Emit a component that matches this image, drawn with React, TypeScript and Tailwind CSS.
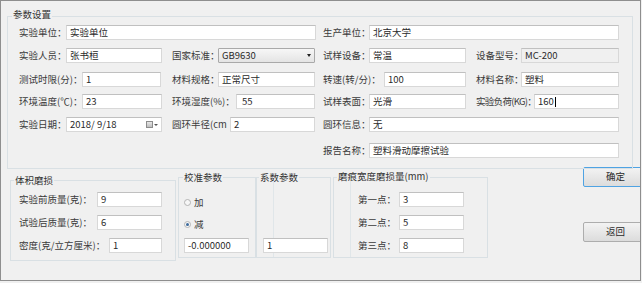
import React from "react";

interface LabelProps {
  w: string;
  className?: string;
  children: React.ReactNode;
}

const Label: React.FC<LabelProps> = ({ w, className = "", children }) => (
  <span className={`${w} ${className} shrink-0 whitespace-nowrap text-[#3a3a3a]`}>
    {children}
  </span>
);

interface BoxProps {
  w: string;
  value?: React.ReactNode;
  gray?: boolean;
  className?: string;
}

const Box: React.FC<BoxProps> = ({ w, value, gray, className = "" }) => (
  <div
    className={`${w} ${className} relative z-10 flex h-[15px] shrink-0 items-center border border-[#d8d8d8] border-t-[#c0c0c0] px-[3px] whitespace-nowrap text-[#2a2a2a] ${
      gray ? "bg-[#f0f0f0]" : "bg-white"
    }`}
  >
    {value}
  </div>
);

const Select: React.FC<{ w: string; value: string }> = ({ w, value }) => (
  <div
    className={`${w} flex h-[15px] shrink-0 items-center justify-between rounded-[1px] border border-[#a9a9a9] bg-linear-to-b from-[#f7f7f7] to-[#e4e4e4] pl-[3px] pr-[3px] text-[#2a2a2a]`}
  >
    <span>{value}</span>
    <span className="h-0 w-0 border-x-[2px] border-t-[3px] border-x-transparent border-t-[#222]" />
  </div>
);

const DateBox: React.FC<{ w: string; value: string }> = ({ w, value }) => (
  <div
    className={`${w} flex h-[15px] shrink-0 items-center justify-between border border-[#d8d8d8] border-t-[#c0c0c0] bg-white pl-[3px] pr-[3px] text-[#2a2a2a]`}
  >
    <span className="whitespace-pre">{value}</span>
    <span className="flex items-center gap-[1px]">
      <span className="h-[7px] w-[7px] border border-[#8c8c8c] bg-linear-to-b from-[#e8e8e8] to-[#bdbdbd]" />
      <span className="h-0 w-0 border-x-[2px] border-t-[2px] border-x-transparent border-t-[#555]" />
    </span>
  </div>
);

interface GroupProps {
  title: string;
  className: string;
  titleClass: string;
  children?: React.ReactNode;
}

const Group: React.FC<GroupProps> = ({ title, className, titleClass, children }) => (
  <div className={`${className} relative shrink-0 border border-[#d9e0e4]`}>
    <span
      className={`${titleClass} absolute bg-[#f0f0f0] px-[1px] leading-[10px] whitespace-nowrap text-[#333]`}
    >
      {title}
    </span>
    {children}
  </div>
);

const Radio: React.FC<{ label: string; checked?: boolean; className: string }> = ({
  label,
  checked,
  className,
}) => (
  <div className={`${className} flex h-[11px] items-center gap-[3px]`}>
    <span className="flex h-[7px] w-[7px] items-center justify-center rounded-full border border-[#b4b4b4] bg-[#f6f6f6]">
      {checked ? <span className="h-[3px] w-[3px] rounded-full bg-[#3d6a9c]" /> : null}
    </span>
    <span className="text-[#3a3a3a]">{label}</span>
  </div>
);

const Button: React.FC<{ label: string; focused?: boolean; className?: string }> = ({
  label,
  focused,
  className = "",
}) => (
  <div
    className={`${className} flex h-[20px] w-[75px] items-center justify-center rounded-[2px] border bg-linear-to-b from-[#f3f3f3] to-[#dcdcdc] text-[#2a2a2a] ${
      focused ? "border-[#4fa3e3]" : "border-[#adadad]"
    }`}
  >
    <span className="-ml-[10px]">{label}</span>
  </div>
);

const App: React.FC = () => {
  return (
    <div className="h-[283px] w-[642px] bg-[#f0f0f0] font-['Noto_Sans_CJK_SC','Noto_Sans',sans-serif] text-[9.5px] leading-none">
      <div className="h-[281px] w-[641px] overflow-hidden border border-[#8e8e8e]">
        {/* 参数设置 */}
        <Group
          title="参数设置"
          className="ml-[6px] mt-[15px] h-[153px] w-[626px]"
          titleClass="left-[4px] -top-[8px]"
        >
          <div className="flex flex-col pl-[11px]">
            <div className="mt-[8px] flex h-[15px] items-center">
              <Label w="w-[47px]">实验单位：</Label>
              <Box w="w-[250px]" value="实验单位" />
              <Label w="w-[46px]" className="ml-[7px]">生产单位：</Label>
              <Box w="w-[250px]" value="北京大学" />
            </div>
            <div className="mt-[8px] flex h-[15px] items-center">
              <Label w="w-[47px]">实验人员：</Label>
              <Box w="w-[96px]" value="张书桓" />
              <Label w="w-[46px]" className="ml-[10px]">国家标准：</Label>
              <Select w="w-[97px]" value="GB9630" />
              <Label w="w-[46px]" className="ml-[8px]">试样设备：</Label>
              <Box w="w-[97px]" value="常温" />
              <Label w="w-[45px]" className="ml-[10px]">设备型号：</Label>
              <Box w="w-[98px]" value="MC-200" gray />
            </div>
            <div className="mt-[9px] flex h-[15px] items-center">
              <Label w="w-[63px]">测试时限(分)：</Label>
              <Box w="w-[79px]" value="1" />
              <Label w="w-[46px]" className="ml-[11px]">材料规格：</Label>
              <Box w="w-[97px]" value="正常尺寸" />
              <Label w="w-[61px]" className="ml-[8px]">转速(转/分)：</Label>
              <Box w="w-[82px]" value="100" />
              <Label w="w-[45px]" className="ml-[10px]">材料名称：</Label>
              <Box w="w-[98px]" value="塑料" />
            </div>
            <div className="mt-[7px] flex h-[15px] items-center">
              <Label w="w-[63px]">环境温度(℃)：</Label>
              <Box w="w-[80px]" value="23" />
              <Label w="w-[64px]" className="ml-[10px]">环境湿度(%)：</Label>
              <Box w="w-[79px]" value={<span className="ml-[2px]">55</span>} />
              <Label w="w-[46px]" className="ml-[8px]">试样表面：</Label>
              <Box w="w-[97px]" value="光滑" />
              <Label w="w-[58px]" className="ml-[10px] tracking-[-0.7px]">实验负荷(KG)：</Label>
              <Box
                w="w-[85px]"
                value={
                  <>
                    160
                    <span className="ml-px h-[10px] w-px bg-black" />
                  </>
                }
              />
            </div>
            <div className="mt-[8px] flex h-[15px] items-center">
              <Label w="w-[47px]">实验日期：</Label>
              <DateBox w="w-[96px]" value="2018/ 9/18" />
              <Label w="w-[58px]" className="ml-[10px]">圆环半径(cm</Label>
              <Box w="w-[85px]" value="2" />
              <Label w="w-[46px]" className="ml-[8px]">圆环信息：</Label>
              <Box w="w-[250px]" value="无" />
            </div>
            <div className="mt-[11px] flex h-[15px] items-center">
              <Label w="w-[46px]" className="ml-[304px]">报告名称：</Label>
              <Box w="w-[250px]" value="塑料滑动摩擦试验" />
            </div>
          </div>
        </Group>

        {/* lower section */}
        <div className="flex items-start">
          <Group
            title="体积磨损"
            className="ml-[9px] mt-[11px] h-[81px] w-[166px]"
            titleClass="left-[3px] -top-[6px]"
          >
            <div className="flex flex-col pl-[8px]">
              <div className="mt-[11px] flex h-[15px] items-center">
                <Label w="w-[78px]">实验前质量(克)：</Label>
                <Box w="w-[65px]" value="9" />
              </div>
              <div className="mt-[8px] flex h-[15px] items-center">
                <Label w="w-[78px]">试验后质量(克)：</Label>
                <Box w="w-[65px]" value="6" />
              </div>
              <div className="mt-[8px] flex h-[15px] items-center">
                <Label w="w-[90px]">密度(克/立方厘米)：</Label>
                <Box w="w-[53px]" value="1" />
              </div>
            </div>
          </Group>

          <Group
            title="校准参数"
            className="ml-[2px] mt-[8px] h-[81px] w-[78px]"
            titleClass="left-[4px] -top-[6px]"
          >
            <div className="flex flex-col pl-[5px]">
              <Radio label="加" className="mt-[19px]" />
              <Radio label="减" checked className="mt-[11px]" />
              <Box w="w-[65px]" value="-0.000000" className="mt-[8px]" />
            </div>
          </Group>

          <Group
            title="系数参数"
            className="mt-[8px] h-[81px] w-[75px]"
            titleClass="left-[2px] -top-[6px]"
          >
            <span className="absolute bottom-0 left-[16px] top-[3px] w-px bg-[#e0e6e9]" />
            <div className="flex flex-col pl-[6px]">
              <Box w="w-[65px]" value="1" className="mt-[60px]" />
            </div>
          </Group>

          <Group
            title="磨痕宽度磨损量(mm)"
            className="ml-[2px] mt-[8px] h-[81px] w-[155px]"
            titleClass="left-[3px] -top-[7px]"
          >
            <span className="absolute bottom-0 left-[16px] top-[3px] w-px bg-[#e0e6e9]" />
            <div className="flex flex-col pl-[24px]">
              <div className="mt-[14px] flex h-[15px] items-center">
                <Label w="w-[41px]">第一点：</Label>
                <Box w="w-[65px]" value="3" />
              </div>
              <div className="mt-[8px] flex h-[15px] items-center">
                <Label w="w-[41px]">第二点：</Label>
                <Box w="w-[65px]" value="5" />
              </div>
              <div className="mt-[8px] flex h-[15px] items-center">
                <Label w="w-[41px]">第三点：</Label>
                <Box w="w-[65px]" value="8" />
              </div>
            </div>
          </Group>

          <div className="ml-[95px] -mt-[2px] flex shrink-0 flex-col">
            <Button label="确定" focused />
            <Button label="返回" className="mt-[35px]" />
          </div>
        </div>
      </div>
    </div>
  );
};

export default App;
